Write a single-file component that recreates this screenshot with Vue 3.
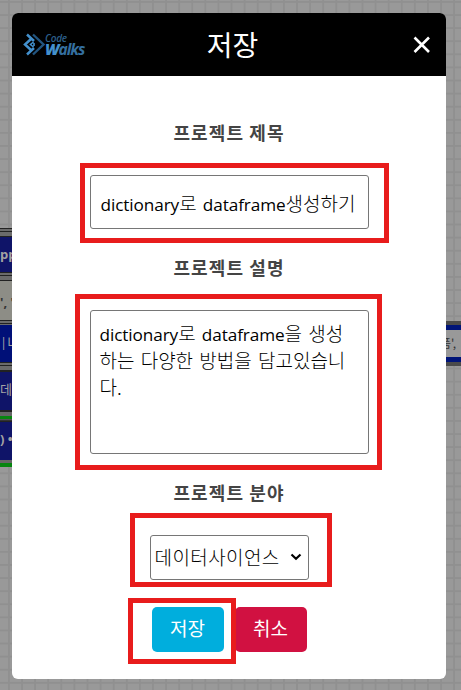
<template>
  <div class="workspace">
    <!-- blocks peeking out behind the modal -->
    <div class="blocks-left">
      <div v-for="(b, i) in blocks" :key="i" class="block" :class="b.type">{{ b.text }}</div>
    </div>
    <div class="block-right">품',</div>

    <div class="modal">
      <header class="modal-header">
        <div class="logo">
          <svg class="logo-mark" width="22" height="23" viewBox="0 0 22 23" fill="none">
            <path d="M10 1.500 L20.500 11.500 L10 21.500" stroke="#225580" stroke-width="2.400" />
            <path d="M4 1.500 L11 8 M8 6 L2 11.500 L8 17 M11 15 L4 21.500" stroke="#4390cd" stroke-width="2.500" />
            <path d="M10.500 9 L7.500 11.500 L10.500 14 M11 10 V13" stroke="#4390cd" stroke-width="1.600" />
          </svg>
          <div class="logo-text">
            <span class="logo-code">Code</span>
            <span class="logo-walks"><b>W</b>alks</span>
          </div>
        </div>
        <h1 class="modal-title">저장</h1>
        <button class="close">
          <svg width="18" height="18" viewBox="0 0 18 18">
            <path d="M1.500 1.500 L16 16 M16 1.500 L1.500 16" stroke="#fff" stroke-width="2.600" />
          </svg>
        </button>
      </header>

      <div class="modal-body">
        <label class="label">프로젝트 제목</label>
        <div class="field title-input">
          <span v-for="(part, i) in split(title)" :key="i" :class="{ latin: part.latin }">{{ part.text }}</span>
        </div>
        <label class="label">프로젝트 설명</label>
        <div class="field desc-input">
          <span v-for="(part, i) in split(description)" :key="i" :class="{ latin: part.latin }">{{ part.text }}</span>
        </div>
        <label class="label">프로젝트 분야</label>
        <div class="select">
          <span>{{ category }}</span>
          <svg width="12" height="8" viewBox="0 0 12 8" fill="none">
            <path d="M1.500 1.500 L6 5.700 L10.500 1.500" stroke="#000" stroke-width="2.200" />
          </svg>
        </div>
        <div class="buttons">
          <button class="btn save">저장</button>
          <button class="btn cancel">취소</button>
        </div>
      </div>
    </div>

    <div class="mark mark-title"></div>
    <div class="mark mark-desc"></div>
    <div class="mark mark-category"></div>
    <div class="mark mark-save"></div>
  </div>
</template>

<script setup>
import { ref } from 'vue'

const title = ref('dictionary로 dataframe생성하기')
const description = ref('dictionary로 dataframe을 생성하는 다양한 방법을 담고있습니다.')
const category = ref('데이터사이언스')

// latin words get their own size next to hangul
function split(text) {
  return text.match(/[a-z]+|[^a-z]+/gi).map((t) => ({ text: t, latin: /[a-z]/i.test(t) }))
}

const blocks = [
  { type: 'navy', text: 'pp' },
  { type: 'value', text: "',  '" },
  { type: 'blue', text: '|너' },
  { type: 'tall', text: '데' },
  { type: 'green', text: ') •' },
]
</script>

<style>
body {
  margin: 0;
  overflow: hidden;
}
</style>

<style scoped>
* {
  box-sizing: border-box;
}

.workspace {
  position: relative;
  width: 461px;
  height: 690px;
  padding: 13px 15px 0 12px;
  overflow: hidden;
  background-color: #999;
  background-image:
    linear-gradient(to right, #909090 2px, transparent 2px),
    linear-gradient(to bottom, #909090 2px, transparent 2px);
  background-size: 13.1px 13.1px;
  background-position: 8px 1px;
  font-family: "Noto Sans CJK KR", sans-serif;
}

/* Blocks */
.blocks-left {
  position: absolute;
  left: 0;
  top: 228px;
  width: 12px;
}

.block {
  height: 44px;
  color: #a3a3a3;
  background: #0f1468;
  font-family: "Open Sans", "Noto Sans CJK KR", sans-serif;
  font-size: 13px;
  font-weight: bold;
  line-height: 35px;
  text-indent: -5px;
  white-space: nowrap;
  overflow: hidden;
}

.block::before {
  content: "";
  display: block;
  height: 9px;
  background: linear-gradient(#222 1px, #6b6b6b 1px, #6b6b6b 3px, #222 3px, #222 4px, #6b6b6b 4px, #6b6b6b 8px, #222 8px);
}

.block.value {
  height: 48px;
  background: #8d8d86;
  color: #333;
  text-indent: -2px;
  line-height: 42px;
}

.block.blue {
  height: 42px;
  background: #001078;
  font-weight: 400;
  line-height: 34px;
  text-indent: -1px;
}

.block.blue::before {
  height: 5px;
}

.block.tall {
  height: 48px;
  font-weight: 400;
  text-indent: 4px;
}

.block.tall::before {
  height: 10px;
}

.block.green {
  height: 57px;
  border-bottom: 4px solid #06850f;
  box-shadow: inset 0 -3px #666;
  text-indent: -1px;
}

.block.green::before {
  height: 12px;
  background: linear-gradient(#222 2px, #666 2px, #666 6px, #06850f 6px, #06850f 9px, #666 9px, #222 11px);
}

.block-right {
  position: absolute;
  left: 440px;
  top: 321px;
  width: 21px;
  height: 45px;
  border-top: 4px solid #4a4a4a;
  border-bottom: 4px solid #4a4a4a;
  background: #999;
  box-shadow: inset 0 5px #001478, inset 0 -5px #001478;
  color: #333;
  font-size: 12px;
  line-height: 36px;
  white-space: nowrap;
  overflow: hidden;
}

/* Modal */
.modal {
  position: relative;
  width: 434px;
  height: 666px;
  border-radius: 6px;
  background: #fff;
  overflow: hidden;
}

.modal-header {
  display: flex;
  align-items: center;
  justify-content: space-between;
  height: 63px;
  padding: 0 15px 0 11px;
  background: #000;
  color: #fff;
}

.logo {
  display: flex;
  align-items: center;
  width: 80px;
}

.logo-text {
  display: flex;
  flex-direction: column;
  font-family: "Open Sans", sans-serif;
  font-style: italic;
  font-weight: bold;
}

.logo-code {
  height: 9px;
  color: #2c5f8a;
  font-size: 10px;
  font-weight: 600;
  letter-spacing: -0.3px;
  line-height: 9px;
}

.logo-walks {
  height: 13px;
  color: #346f9f;
  font-size: 15.5px;
  letter-spacing: -1px;
  line-height: 13px;
}

.logo-walks b {
  color: #4390cd;
}

.modal-title {
  margin: 0 0 2px 11px;
  font-size: 28px;
  font-weight: 400;
  line-height: 40px;
}

.close {
  display: flex;
  justify-content: flex-end;
  width: 80px;
  padding: 0;
  border: 0;
  background: none;
}

.modal-body {
  display: flex;
  flex-direction: column;
  align-items: center;
  padding-top: 43px;
}

.label {
  height: 27px;
  color: #444;
  font-size: 18px;
  font-weight: 700;
  letter-spacing: 1.1px;
  line-height: 27px;
}

.field {
  width: 279px;
  margin-top: 29px;
  margin-bottom: 25px;
  padding: 8px 9px;
  border: 1px solid #767676;
  border-radius: 3px;
  background: #fff;
  color: #000;
  font-size: 19px;
  font-weight: 300;
  line-height: 27px;
  word-spacing: 2px;
}

.latin {
  font-family: "Open Sans", sans-serif;
  font-size: 17.2px;
  font-weight: 400;
  letter-spacing: -0.1px;
  line-height: 1;
}

.title-input {
  height: 54px;
  padding-top: 13px;
  padding-left: 10px;
  white-space: nowrap;
}

.desc-input {
  height: 144px;
  padding-top: 8px;
  padding-right: 17px;
  word-break: break-all;
}

.select {
  display: flex;
  align-items: center;
  justify-content: space-between;
  width: 159px;
  height: 45px;
  margin-top: 29px;
  padding: 0 6px 2px 4px;
  border: 1px solid #767676;
  border-radius: 3px;
  font-size: 19px;
  font-weight: 300;
  letter-spacing: 0.4px;
}

.buttons {
  display: flex;
  gap: 11px;
  margin-top: 27px;
}

.btn {
  width: 72px;
  height: 45px;
  padding: 0 0 4px;
  border: 0;
  border-radius: 5px;
  color: #fff;
  font-family: inherit;
  font-size: 19px;
}

.save {
  background: #00aedd;
}

.cancel {
  background: #d11141;
}

/* Red highlight frames */
.mark {
  position: absolute;
  border: 5px solid #e81c1c;
}

.mark-title {
  left: 80px;
  top: 163px;
  width: 309px;
  height: 80px;
}

.mark-desc {
  left: 75px;
  top: 294px;
  width: 307px;
  height: 176px;
}

.mark-category {
  left: 130px;
  top: 513px;
  width: 202px;
  height: 74px;
}

.mark-save {
  left: 128px;
  top: 598px;
  width: 108px;
  height: 66px;
}
</style>
